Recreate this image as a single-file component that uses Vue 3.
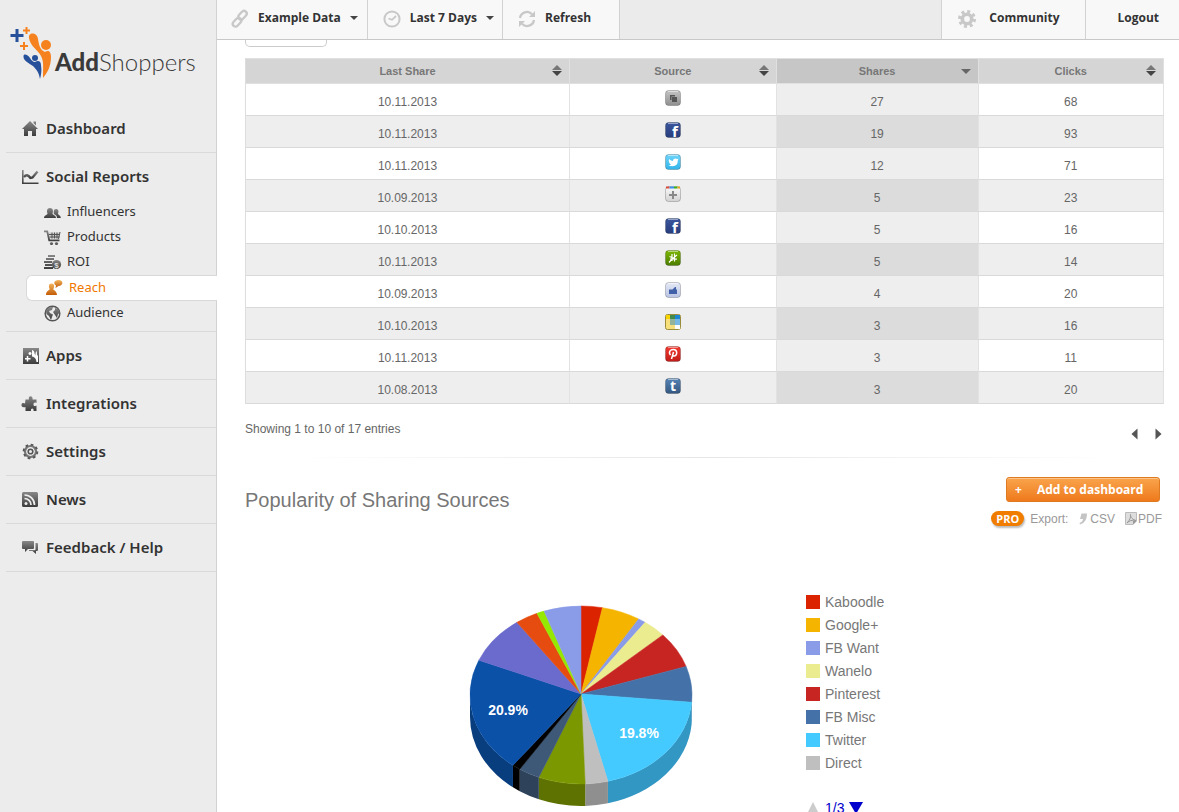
<script setup>
const icons = {
  home: '<path d="M9 1 L17 9 H15 V16 H11 V11 H7 V16 H3 V9 H1 Z M12.500 1.500 h2.500 v4 l-2.500 -2.500z"/>',
  chart: '<path d="M1 2 h1.600 v12.400 H17.500 V16 H1 Z"/><path d="M3 9 Q6 5 9.500 10 L11.500 9.500 L16.500 3.500" fill="none" stroke="url(#ink)" stroke-width="2.400"/>',
  people: '<path d="M6 4 c3 0 3.500 3 2.500 5.500 c0 1.500 3.500 1.500 3.500 4.500 H0 c0 -3 3.500 -3 3.500 -4.500 C2.500 7 3 4 6 4z"/><path d="M12 5 c2.500 0 3 2.500 2 4.500 c0 1.500 2.800 1.500 2.800 4.500 H13 c0 -2.500 -1.500 -3 -3 -4 C9.500 8 9.500 5 12 5z"/>',
  cart: '<path d="M0 1.500 h4 l2 9 h9.500 v1.800 H4.500 L2.500 3.300 H0z"/><path d="M5 3.500 h11.500 l-1.500 6 H6.300z" fill="#ccc"/><path d="M5 5.500 H16 M5.500 8 H15.500 M8 3.500 v6 M10.500 3.500 v6 M13 3.500 v6 M16 3 l-1.500 7" stroke="#555" fill="none"/><circle cx="7.500" cy="14.500" r="1.600"/><circle cx="12.500" cy="14.500" r="1.600"/>',
  coins: '<path d="M4 1h7v2H4z M2 4h8v2H2z M0 7h8v2H0z M1 10h7v2H1z M0 13h9v2H0z"/><circle cx="12.500" cy="10.500" r="4.600"/><text x="12.500" y="13.500" font-size="8" font-weight="bold" text-anchor="middle" font-family="Liberation Sans, sans-serif" style="fill:#ddd">$</text>',
  reach: '<g fill="url(#amber)"><path d="M5.500 4.500 c3.200 0 3 3.500 1.800 5.500 c0 1.500 3.500 1.500 3.700 6 H0 c0 -4.500 3.500 -4.500 3.700 -6 C2.500 8 2.500 4.500 5.500 4.500z"/><path d="M12.500 1 c5.500 0 5 6 0 6 l-3 2 l.5 -2.500 C7 5 8 1 12.500 1z"/></g>',
  globe: '<circle cx="8.500" cy="8.500" r="7.300" fill="none" stroke="#555" stroke-width="1.500"/><path d="M2 6 C4 1 9 2 9 2 L8 5 L5 6 L6 8 L9 9.500 L8 12 L7 15 L5 11 L2.500 9z M11 3 l3 1 l2 4 l-2 1 l-1 4 l-2 -3 l-2 -3 l2 -2z"/>',
  apps: '<path d="M2 1h16v16H2z"/><path d="M6.500 9 v5.500 M4 11.700 h5.500 M9 5 v3 M7.500 6.500 h3" stroke="#fff" stroke-width="1.500" fill="none"/><path d="M11 3 q2.500 .5 2.500 3.500 L14.500 8.500 Q14 5 16 4 Q15.500 8 17 9 V15 H15.500 Q15 10 11 9.500z" fill="#fff"/>',
  puzzle: '<path d="M6 4.500 H8 C6.500 0 12.500 0 11.500 4.500 H15.500 V8 C13.500 7 12.500 8 12.500 9.500 C12.500 11 13.500 11.500 15.500 10.500 V16 H12.500 C13.500 12.500 9 12.500 10 16 H4.500 V12 C2 13 0 11.500 .5 9.500 C1 7.500 3 8 4 8.500 L4.500 4.500z"/>',
  gear: '<circle cx="9.500" cy="8.500" r="5.500" fill="none" stroke="#777" stroke-width="2.200"/><circle cx="9.500" cy="8.500" r="2.300" fill="none" stroke="#555" stroke-width="1.600"/><circle cx="9.500" cy="8.500" r="6.900" fill="none" stroke="#555" stroke-width="1.800" stroke-dasharray="2.700 2.720"/>',
  rss: '<rect x="1" y="1" width="16" height="15" rx="1.500"/><circle cx="5" cy="12.500" r="1.500" fill="#eee"/><path d="M3.500 7.500 A6.500 6.500 0 0 1 10 14 M3.500 4 A10 10 0 0 1 13.500 14" fill="none" stroke="#eee" stroke-width="1.700"/>',
  chat: '<path d="M2 2 h10 q1 0 1 1 v6 q0 1 -1 1 H7 L4 13 V10 H2 q-1 0 -1 -1 V3 q0 -1 1 -1z"/><path d="M14.500 4 H16 q1 0 1 1 v6 q0 1 -1 1 h-1 v3 l-3.500 -3 H8 v-.8 h5.500 q1 0 1 -1z"/>',
  link: '<g fill="none" stroke="#c8c8c8" stroke-width="2.300"><rect x="6.500" y="2.500" width="10" height="5.500" rx="2.750" transform="rotate(-48 11.500 5.250)"/><rect x="1" y="9.500" width="10" height="5.500" rx="2.750" transform="rotate(-48 6 12.250)"/></g>',
  clock: '<circle cx="9" cy="9" r="7.600" fill="none" stroke="#c8c8c8" stroke-width="2"/><path d="M13 6 L9 9.800 L5.500 8.500" fill="none" stroke="#c8c8c8" stroke-width="1.800"/>',
  refresh: '<path d="M2 8 A7 7 0 0 1 14 4.200 M16 10 A7 7 0 0 1 4 13.800" fill="none" stroke="#c8c8c8" stroke-width="2.300"/><path d="M17 1 V7 H11z M1 17 V11 H7z" style="fill:#c8c8c8"/>',
  cog: '<circle cx="9" cy="9" r="4.700" fill="none" stroke="#c8c8c8" stroke-width="3.600"/><circle cx="9" cy="9" r="7.500" fill="none" stroke="#c8c8c8" stroke-width="3" stroke-dasharray="3 2.890"/>',
}

const gloss = (a) => `<rect x=".5" y=".5" width="15" height="15" rx="3" fill="url(#${a})" stroke="#0003"/><path d="M3 1.500 H13" stroke="#fff7" fill="none"/>`
const letter = (t, x, y, size) => `<text x="${x}" y="${y}" font-size="${size}" font-weight="bold" font-family="Noto Sans, sans-serif" fill="#fff" text-anchor="middle">${t}</text>`
const sources = {
  copy: gloss('s-grey') + '<path d="M5 5h5v1.500H6.500V10H5z M7 7h5v5H7z" fill="#555"/>',
  facebook: gloss('s-navy') + letter('f', 10, 15, 15),
  twitter: gloss('s-sky') + '<path d="M4 5 Q6 7 8 7 Q8 4.500 10.500 4.500 Q11.500 4.500 12 5 L13.500 4.700 L12.800 6.200 Q13 12 7.500 12.300 Q5 12.300 3.500 11.200 Q5.500 11.200 6 10.500 Q4.500 10 4.300 8.800 Q3.300 7 4 5z" fill="#fff"/>',
  plus: gloss('s-light') + '<path d="M1 1.500h3.500" stroke="#dd4b39" stroke-width="2"/><path d="M4.500 1.500H9" stroke="#3b8ee8" stroke-width="2"/><path d="M9 1.500h3.500" stroke="#3cb015" stroke-width="2"/><path d="M12.500 1.500H15" stroke="#e8a21c" stroke-width="2"/><path d="M8 5v8M4 9h8" stroke="#888" stroke-width="2"/>',
  leaf: gloss('s-green') + '<path d="M4 12.500 L7 9 M7 4v7 M9.500 3.500v8 M4.500 6.500l7 3 M12 5l-6 5 M5 9h7" stroke="#fff" stroke-width="1.200" fill="none"/>',
  like: gloss('s-pale') + '<path d="M4 7.500h3.500L10 5h1v2.500h1V12H4z" fill="#4160a8"/>',
  kaboodle: '<rect x=".5" y=".5" width="15" height="15" rx="2" fill="#f7df7b" stroke="#9a8c3a"/><path d="M1 1h4v4H1z" fill="#f9d500"/><path d="M5 1h5v4H5z" fill="#3f8a4c"/><path d="M10 1h5v4h-5z" fill="#1d86d2"/><path d="M5 5h5v6H5z" fill="#94b39b"/><path d="M10 5h5v6h-5z" fill="#77b9e2"/><path d="M10 11h5v4h-5z" fill="#fff"/>',
  pinterest: gloss('s-red') + '<path d="M5.500 9 C3 6 5.500 3.500 8.300 3.500 C13 3.500 12.300 10 9.200 10 C8.200 10 7.800 9.300 7.800 9.300 M8.500 6 L6.500 13" fill="none" stroke="#fff" stroke-width="1.500"/>',
  tumblr: gloss('s-steel') + letter('t', 8, 13, 14),
}

const topLeft = [
  { label: 'Example Data', icon: 'link', caret: true },
  { label: 'Last 7 Days', icon: 'clock', caret: true },
  { label: 'Refresh', icon: 'refresh' },
]
const reports = [
  { label: 'Influencers', icon: 'people' },
  { label: 'Products', icon: 'cart' },
  { label: 'ROI', icon: 'coins' },
  { label: 'Reach', icon: 'reach', active: true },
  { label: 'Audience', icon: 'globe' },
]
const nav = [
  { label: 'Dashboard', icon: 'home' },
  { label: 'Social Reports', icon: 'chart', children: reports },
  { label: 'Apps', icon: 'apps' },
  { label: 'Integrations', icon: 'puzzle' },
  { label: 'Settings', icon: 'gear' },
  { label: 'News', icon: 'rss' },
  { label: 'Feedback / Help', icon: 'chat' },
]
const rows = [
  ['10.11.2013', 'copy', 27, 68],
  ['10.11.2013', 'facebook', 19, 93],
  ['10.11.2013', 'twitter', 12, 71],
  ['10.09.2013', 'plus', 5, 23],
  ['10.10.2013', 'facebook', 5, 16],
  ['10.11.2013', 'leaf', 5, 14],
  ['10.09.2013', 'like', 4, 20],
  ['10.10.2013', 'kaboodle', 3, 16],
  ['10.11.2013', 'pinterest', 3, 11],
  ['10.08.2013', 'tumblr', 3, 20],
]
const legend = [
  ['Kaboodle', '#dc2300'],
  ['Google+', '#f4b400'],
  ['FB Want', '#8a9be8'],
  ['Wanelo', '#ebeb90'],
  ['Pinterest', '#c62522'],
  ['FB Misc', '#4472a8'],
  ['Twitter', '#45caff'],
  ['Direct', '#bfbfbf'],
]

const pieData = [
  [3.1, '#dc2300'], [5.6, '#f4b400'], [1.1, '#8a9be8'], [3.4, '#ebeb90'],
  [6.6, '#c62522'], [6.5, '#4472a8', '#335680'], [19.8, '#45caff', '#3397c4'],
  [3.3, '#bfbfbf', '#8f8f8f'], [6.8, '#7c9800', '#5d7200'], [3.1, '#3e5878', '#2e425a'],
  [1.2, '#000', '#000'], [20.9, '#0b51a8', '#083d7e'], [8.8, '#6a6bcd'],
  [3.3, '#e64c0f'], [1.1, '#95e800'], [5.4, '#8a9be8'],
]
const RX = 111
const RY = 89
const DEPTH = 22
const point = (p) => {
  const a = (p / 100) * Math.PI * 2
  return [112 + RX * Math.sin(a), 90 - RY * Math.cos(a)]
}
const slices = []
let start = 0
for (const [value, color, side] of pieData) {
  const end = start + value
  const [x1, y1] = point(start)
  const [x2, y2] = point(end)
  const slice = { color, side, top: `M112 89 L${x1} ${y1} A${RX} ${RY} 0 0 1 ${x2} ${y2}Z` }
  if (side) {
    const [a, b] = point(Math.max(start, 25))
    const [c, d] = point(Math.min(end, 75))
    slice.wall = `M${a} ${b} A${RX} ${RY} 0 0 1 ${c} ${d} V${d + DEPTH} A${RX} ${RY} 0 0 0 ${a} ${b + DEPTH}Z`
  }
  slices.push(slice)
  start = end
}
const gradients = [
  ['ink', '#888', '#3c3c3c'], ['amber', '#f2b45c', '#c25c08'],
  ['s-grey', '#c4c4c4', '#8f8f8f'], ['s-navy', '#3c579e', '#263c7c'], ['s-sky', '#6fd5fa', '#30b4ea'],
  ['s-light', '#fafafa', '#d2d2d2'], ['s-green', '#7cb800', '#4b7c00'], ['s-pale', '#e6eaf6', '#b8c3e2'],
  ['s-red', '#f23a31', '#c01c18'], ['s-steel', '#5683b4', '#345780'],
]
</script>

<template>
  <div class="app">
    <svg class="defs" width="0" height="0" aria-hidden="true">
      <defs>
        <linearGradient v-for="[id, a, b] in gradients" :id="id" :key="id" x1="0" y1="0" x2="0" y2="1">
          <stop offset="0" :stop-color="a" /><stop offset="1" :stop-color="b" />
        </linearGradient>
      </defs>
    </svg>

    <aside class="sidebar">
      <a class="logo" href="#">
        <svg width="48" height="56" viewBox="0 0 48 56" aria-hidden="true">
          <g fill="none" stroke="#27509b" stroke-width="3"><path d="M7 4v13M0.500 10.500h13" /></g>
          <g fill="none" stroke="#f5821f" stroke-width="2"><path d="M16.500 2v7M13 5.500h7M14 17v8M10 21h8" /></g>
          <g fill="#f5821f">
            <path d="M19 13 C18 7 27 7 28 14 C29 20 30 25 35 27 C38 25 41 26 41 32 C41 42 37 48 33 53 C33 43 34 36 31 31 C28 25 20 21 19 13z" />
            <circle cx="36" cy="20" r="5" />
          </g>
          <g fill="#27509b">
            <path d="M13.500 31 C14 28 18 30 20 33 C21 35 23 37 25 37 C28 35 31 36 31 40 C32 46 31 50 30 54 C29 48 27 45 23 41 C19 38 13 36 13.500 31z" />
            <circle cx="25" cy="33" r="3" />
          </g>
        </svg>
        <span class="wordmark"><b>Add</b>Shoppers</span>
      </a>
      <nav>
        <div v-for="item in nav" :key="item.label" class="section">
          <a class="nav-link" href="#">
            <svg class="icon" width="18" height="18" viewBox="0 0 18 18" v-html="icons[item.icon]" />
            {{ item.label }}
          </a>
          <ul v-if="item.children">
            <li v-for="sub in item.children" :key="sub.label">
              <a :class="['sub-link', { active: sub.active }]" href="#">
                <svg class="icon" width="17" height="17" viewBox="0 0 17 17" v-html="icons[sub.icon]" />
                {{ sub.label }}
              </a>
            </li>
          </ul>
        </div>
      </nav>
    </aside>

    <div class="page">
      <header class="topbar">
        <button v-for="t in topLeft" :key="t.label" type="button" :class="['tab', t.icon]">
          <svg class="icon" width="18" height="18" viewBox="0 0 18 18" v-html="icons[t.icon]" />
          {{ t.label }}
          <i v-if="t.caret" class="caret" />
        </button>
        <span class="spacer" />
        <a class="tab community" href="#">
          <svg class="icon" width="18" height="18" viewBox="0 0 18 18" v-html="icons.cog" />
          Community
        </a>
        <a class="tab logout" href="#">Logout</a>
      </header>

      <main>
        <div class="tail" />
        <table>
          <colgroup><col class="c1"><col class="c2"><col class="c3"><col class="c4"></colgroup>
          <thead>
            <tr>
              <th v-for="h in ['Last Share', 'Source', 'Shares', 'Clicks']" :key="h" :class="{ sorted: h === 'Shares' }">
                {{ h }}
                <svg class="sort" width="10" height="12" viewBox="0 0 10 12" aria-hidden="true">
                  <template v-if="h !== 'Shares'">
                    <path d="M5 0 L10 5 H0z" fill="#777" /><path d="M0 6 H10 L5 11z" fill="#444" />
                  </template>
                  <path v-else d="M0 4 H10 L5 9z" fill="#666" />
                </svg>
              </th>
            </tr>
          </thead>
          <tbody>
            <tr v-for="(r, i) in rows" :key="i">
              <td>{{ r[0] }}</td>
              <td class="source"><svg width="16" height="16" viewBox="0 0 16 16" role="img" :aria-label="r[1]" v-html="sources[r[1]]" /></td>
              <td class="sorted">{{ r[2] }}</td>
              <td>{{ r[3] }}</td>
            </tr>
          </tbody>
        </table>

        <div class="table-foot">
          <span>Showing 1 to 10 of 17 entries</span>
          <div class="pager">
            <button type="button" aria-label="Previous page"><svg width="7" height="12" viewBox="0 0 7 12"><path d="M6.500 0.500 V11.500 L0.500 6z" fill="#555" /></svg></button>
            <button type="button" aria-label="Next page"><svg width="7" height="12" viewBox="0 0 7 12"><path d="M0.500 0.500 V11.500 L6.500 6z" fill="#555" /></svg></button>
          </div>
        </div>

        <div class="rule" />

        <section class="panel-head">
          <h2>Popularity of Sharing Sources</h2>
          <div class="actions">
            <button type="button" class="add"><span>+</span>Add to dashboard</button>
            <div class="export">
              <span class="pro">PRO</span>
              <span class="label">Export:</span>
              <a href="#" class="csv">
                <svg width="8" height="12" viewBox="0 0 8 12"><path d="M2.500 0.500 H8 C8 6 6 10 1 11.500 L0.500 10 C3 9 4 7.500 4 6 H1z" fill="#c4c4c4" /></svg>CSV
              </a>
              <a href="#" class="pdf">
                <svg width="12" height="13" viewBox="0 0 12 13"><path d="M0.500 0.500 H11.500 V9 L8 12.500 H0.500z" fill="#ddd" stroke="#bbb" /><path d="M2 11 C5 8 6 5 5.500 2.500 C5 5 8 8 11 8.500 C7 7.500 4 9 2 11" fill="none" stroke="#999" /><path d="M8 12.500 L11.500 9 H8z" fill="#999" /></svg>PDF
              </a>
            </div>
          </div>
        </section>

        <section class="chart">
          <svg class="pie" width="224" height="202" viewBox="0 0 224 202" role="img" aria-label="Popularity of Sharing Sources">
            <template v-for="(s, i) in slices" :key="'w' + i">
              <path v-if="s.wall" :d="s.wall" :fill="s.side" />
            </template>
            <path v-for="(s, i) in slices" :key="i" :d="s.top" :fill="s.color" :stroke="s.color" stroke-width="0.500" />
            <text x="39" y="110">20.9%</text>
            <text x="170" y="133">19.8%</text>
          </svg>
          <div class="legend">
            <ul>
              <li v-for="[name, color] in legend" :key="name"><i :style="{ background: color }" />{{ name }}</li>
            </ul>
            <div class="legend-pager">
              <button type="button" aria-label="Previous"><svg width="14" height="12" viewBox="0 0 14 12"><path d="M7 0 L13 12 H1z" fill="#ccc" /></svg></button>
              <span>1/3</span>
              <button type="button" aria-label="Next"><svg width="14" height="12" viewBox="0 0 14 12"><path d="M0 0 H14 L7 12z" fill="#0000cc" /></svg></button>
            </div>
          </div>
        </section>
      </main>
    </div>
  </div>
</template>

<style>
body { background: #fff; }
</style>

<style scoped>
* { box-sizing: border-box; }
.app { display: flex; height: 100vh; overflow: hidden; font-family: "Liberation Sans", Arial, sans-serif; font-size: 12px; color: #666; }
.defs { position: absolute; }
a { color: inherit; text-decoration: none; }
button { font: inherit; color: inherit; border: 0; background: none; padding: 0; cursor: pointer; }
ul { list-style: none; margin: 0; padding: 0; }
.icon { flex: none; fill: url(#ink); overflow: visible; }

.sidebar { flex: none; width: 217px; background: #ececec; border-right: 1px solid #d2d2d2; padding-left: 6px; font-family: "Noto Sans", sans-serif; color: #333; }
.logo { display: flex; height: 105px; padding: 25px 0 0 4px; }
.wordmark { margin: 22px 0 0 -3px; font-family: Lato, sans-serif; font-size: 24px; line-height: 30px; font-weight: 300; color: #3a3a3a; }
.wordmark b { font-weight: 900; }
.section { border-bottom: 1px solid #d9d9d9; }
.nav-link { display: flex; align-items: center; gap: 7px; height: 47px; padding: 0 0 2px 15px; font-size: 15px; font-weight: 600; }
.nav-link .icon { margin-top: 3px; }
.section ul { padding-bottom: 5px; }
.sub-link { display: flex; align-items: center; gap: 6px; height: 25px; margin-left: 20px; padding: 0 0 3px 18px; font-size: 13px; }
.sub-link .icon { margin-top: 3px; }
.sub-link.active { height: 26px; margin-right: -1px; padding: 0 0 2px 19px; color: #f07800; background: #fff; border: 1px solid #d9d9d9; border-right: 0; border-radius: 6px 0 0 6px; }
.sub-link.active .icon { margin-top: 0; }

.page { flex: 1; min-width: 0; }
.topbar { display: flex; height: 40px; background: #ebebeb; border-bottom: 1px solid #c8c8c8; }
.tab { display: flex; align-items: center; padding: 0 9px 4px 14px; background: #f8f8f8; border-right: 1px solid #d2d2d2; font-family: "Open Sans", sans-serif; font-size: 12px; font-weight: 700; color: #333; }
.tab .icon { margin: 2px 9px 0 0; }
.tab.clock { padding: 0 8px 4px 15px; }
.tab.refresh { padding: 0 28px 4px 15px; }
.caret { margin-left: 9px; border: 4px solid transparent; border-top-color: #444; border-bottom: 0; }
.spacer { flex: 1; }
.community { border-left: 1px solid #d2d2d2; padding: 0 26px 4px 16px; }
.tab.community .icon { margin-right: 13px; }
.logout { padding: 0 20px 4px 31px; border-right: 0; }

main { padding: 0 15px 0 28px; }
.tail { width: 82px; height: 7px; margin-bottom: 11px; border: 1px solid #ccc; border-top: 0; border-radius: 0 0 5px 5px; }
table { width: 100%; table-layout: fixed; border-collapse: separate; border-spacing: 0; border-left: 1px solid #ddd; text-align: center; }
.c1 { width: 35.3%; }
.c2 { width: 22.5%; }
.c3 { width: 22%; }
.c4 { width: 20.2%; }
th { position: relative; padding: 5px 0; line-height: 14px; font-size: 11px; color: #777; background: #d5d5d5; border: 1px solid #e0e0e0; border-left: 0; }
th.sorted { background: #c6c6c6; }
.sort { position: absolute; right: 7px; top: 6px; }
td { padding: 10px 0 5px; line-height: 16px; border-right: 1px solid #e2e2e2; border-bottom: 1px solid #d9d9d9; }
tbody tr:nth-child(even) { background: #eee; }
td.sorted { background: #eee; }
tr:nth-child(even) td.sorted { background: #dcdcdc; }
td.source { padding: 6px 0 9px; }
.source svg { display: block; margin: 0 auto; overflow: visible; }

.table-foot { display: flex; justify-content: space-between; padding-top: 18px; line-height: 14px; }
.pager { display: flex; gap: 17px; padding: 6px 2px 0 0; }
.pager svg { display: block; }
.rule { height: 1px; margin-top: 17px; background: linear-gradient(90deg, transparent 5%, #e6e6e6 50%, transparent 95%); }

.panel-head { display: flex; justify-content: space-between; padding-top: 19px; }
h2 { margin: 11px 0 0; font-size: 20px; line-height: 24px; font-weight: 400; color: #777; }
.actions { display: flex; flex-direction: column; align-items: flex-end; }
.add { display: flex; align-items: center; width: 154px; height: 25px; margin-right: 4px; padding-left: 8px; border: 1px solid #df7a20; border-radius: 3px; background: linear-gradient(#faa44c, #ee7a1c); box-shadow: inset 0 1px 0 #fbc48a; color: #fff; font-family: "Open Sans", sans-serif; font-size: 12px; font-weight: 700; }
.add span { width: 22px; text-align: left; }
.export { display: flex; align-items: center; margin-top: 9px; padding-right: 2px; line-height: 14px; color: #999; }
.pro { padding: 0 5px; margin-right: 6px; border-radius: 8px; background: #f07d00; box-shadow: 1px 2px 2px #bbb; color: #fff; font-family: "Open Sans", sans-serif; font-size: 11px; line-height: 15px; font-weight: 700; }
.export a { display: flex; align-items: center; gap: 3px; margin-left: 11px; }
.export .pdf { gap: 1px; margin-left: 10px; }

.chart { display: flex; gap: 113px; padding: 79px 0 0 224px; }
.pie { flex: none; }
.pie text { fill: #fff; font-size: 14px; font-weight: 700; text-anchor: middle; }
.legend { margin-top: -15px; font-size: 14px; color: #777; }
.legend li { display: flex; align-items: center; gap: 5px; height: 23px; }
.legend i { width: 14px; height: 14px; }
.legend-pager { display: flex; align-items: center; gap: 5px; margin-top: 26px; color: #0000cc; line-height: 16px; }
.legend-pager svg { display: block; }
</style>
